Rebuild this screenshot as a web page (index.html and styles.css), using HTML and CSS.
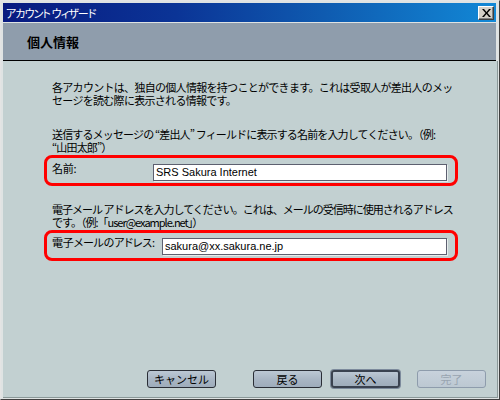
FILE: index.html
```html
<!DOCTYPE html>
<html lang="ja">
<head>
<meta charset="utf-8">
<link rel="stylesheet" href="styles.css">
</head>
<body>
<div class="window">
  <div class="titlebar">
    <span class="title">アカウント ウィザード</span>
    <button class="close" aria-label="閉じる">
      <svg width="9" height="8" viewBox="0 0 9 8"><path d="M0 0h2l2.5 3 2.5-3h2L5.5 4 9 8H7L4.5 5 2 8H0l3.5-4z" fill="#000"/></svg>
    </button>
  </div>
  <div class="header">個人情報</div>
  <div class="content">
    <p class="para p1">各アカウントは、独自の個人情報を持つことができます。これは受取人が差出人のメッ<br>セージを読む際に表示される情報です。</p>
    <p class="para p2">送信するメッセージの “差出人” フィールドに表示する名前を入力してください。（例:<br>“山田太郎”）</p>
    <div class="field f1">
      <label class="label">名前:</label>
      <div class="input in1">SRS Sakura Internet</div>
    </div>
    <p class="para p3">電子メール アドレスを入力してください。これは、メールの受信時に使用されるアドレス<br>です。（例:「user@example.net」）</p>
    <div class="field f2">
      <label class="label">電子メールのアドレス:</label>
      <div class="input in2">sakura@xx.sakura.ne.jp</div>
    </div>
    <div class="buttons">
      <button class="btn cancel">キャンセル</button>
      <button class="btn back">戻る</button>
      <button class="btn next">次へ</button>
      <button class="btn finish" disabled>完了</button>
    </div>
  </div>
</div>
</body>
</html>
```
FILE: styles.css
```css
html, body {
  margin: 0;
  padding: 0;
  background: #d4d0c8;
}
.window {
  width: 500px;
  height: 400px;
  box-sizing: border-box;
  border-top: 1px solid #e4e4e4;
  border-left: 1px solid #e4e4e4;
  border-right: 1px solid #404040;
  border-bottom: 1px solid #404040;
  padding: 2px 1px 1px 2px;
  background: #dfe3e3;
  display: flex;
  flex-direction: column;
  font-family: "Noto Sans CJK JP", "Liberation Sans", sans-serif;
  font-size: 11px;
  color: #000;
}
.titlebar {
  height: 19px;
  background: linear-gradient(to right, #081a80 0%, #0b3496 35%, #0f5bb0 65%, #1288d6 100%);
  display: flex;
  align-items: center;
  padding: 0 2px 0 2px;
  margin-right: 2px;
}
.title {
  color: #fff;
  font-size: 11px;
  font-feature-settings: "palt";
  letter-spacing: -0.9px;
  flex: 1;
  padding-left: 1px;
}
.close {
  width: 16px;
  height: 14px;
  padding: 0;
  margin: 0;
  background: #d4d0c8;
  border: 1px solid;
  border-color: #fff #404040 #404040 #fff;
  box-shadow: inset -1px -1px 0 #808080;
  display: flex;
  align-items: center;
  justify-content: center;
}
.header {
  margin-top: 1px;
  height: 38px;
  background: #8f9dac;
  border-bottom: 1px solid #000;
  font-weight: bold;
  font-size: 13px;
  line-height: 16px;
  padding: 11px 0 0 24px;
  box-sizing: border-box;
  margin-right: 2px;
}
.content {
  flex: 1;
  background: #c2d0d1;
  border-right: 1px solid #8a9898;
  border-bottom: 1px solid #8a9898;
  display: flex;
  flex-direction: column;
}
.para {
  margin: 0;
  padding-left: 49px;
  line-height: 13px;
  white-space: nowrap;
  letter-spacing: -0.7px;
}
.p1 { margin-top: 20px; }
.p2 { margin-top: 21px; letter-spacing: -0.85px; }
.p3 { margin-top: 17px; letter-spacing: -1px; }
.field {
  margin: 1px 0 0 41px;
  width: 414px;
  height: 31px;
  box-sizing: border-box;
  border: 3px solid #ff0000;
  border-radius: 8px;
  display: flex;
  align-items: flex-start;
  padding: 0 8px 0 5px;
}
.label {
  white-space: nowrap;
  line-height: 13px;
  font-feature-settings: "palt";
  letter-spacing: -0.2px;
}
.f1 .label { margin-top: 4px; }
.f2 .label { margin-top: 3px; }
.input {
  margin-left: auto;
  height: 17px;
  box-sizing: border-box;
  background: #fff;
  border: 1px solid #5d6070;
  box-shadow: 1px 1px 0 #e6ecec;
  font-family: "Liberation Sans", sans-serif;
  font-size: 11px;
  line-height: 15px;
  padding-left: 2px;
  white-space: nowrap;
}
.f1 .input { width: 294px; margin-top: 6px; }
.f2 .input { width: 285px; margin-top: 5px; }
.buttons {
  margin-top: auto;
  display: flex;
  padding: 0 10px 9px 144px;
}
.btn {
  width: 69px;
  height: 18px;
  box-sizing: border-box;
  padding: 0;
  font-family: "Noto Sans CJK JP", sans-serif;
  font-size: 11px;
  line-height: 14px;
  color: #000;
  border: 1px solid #2a2e36;
  border-radius: 3px;
  background: linear-gradient(to bottom, #bcc8d4 0%, #a9b6c4 50%, #9eacbb 100%);
}
.back { margin-left: 37px; }
.next {
  margin-left: 9px;
  border: 2px solid #3a4250;
  box-shadow: 0 0 0 1px #7c8a9c;
}
.finish {
  margin-left: 17px;
  border-color: #8e9cac;
  color: #98a4b0;
  background: linear-gradient(to bottom, #c8d2dc 0%, #bcc8d2 100%);
}
```
